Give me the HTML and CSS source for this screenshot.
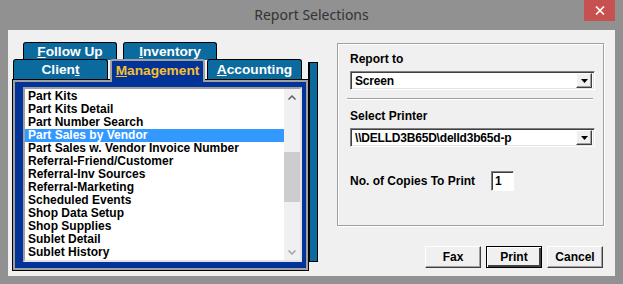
FILE: index.html
```html
<!DOCTYPE html>
<html lang="en">
<head>
  <meta charset="UTF-8" />
  <title>Report Selections</title>
  <link rel="stylesheet" href="styles.css">
</head>
<body>
  <div class="window">
    <div class="titlebar">
      <span class="title">Report Selections</span>
      <button class="close" title="Close">
        <svg width="10" height="9" viewBox="0 0 10 9"><path d="M1 0.5 L9 8.5 M9 0.5 L1 8.5" stroke="#fff" stroke-width="1.6"/></svg>
      </button>
    </div>

    <div class="client">
      <div class="tabs">
        <div class="tabs-col">
          <div class="tab-row back">
            <div class="tab"><u>F</u>ollow Up</div>
            <div class="tab"><u>I</u>nventory</div>
          </div>
          <div class="tab-row front">
            <div class="tab">Clien<u>t</u></div>
            <div class="tab active"><u>M</u>anagement</div>
            <div class="tab"><u>A</u>ccounting</div>
          </div>
          <div class="panel">
            <div class="listbox">
              <ul class="items">
                <li>Part Kits</li>
                <li>Part Kits Detail</li>
                <li>Part Number Search</li>
                <li class="selected">Part Sales by Vendor</li>
                <li>Part Sales w. Vendor Invoice Number</li>
                <li>Referral-Friend/Customer</li>
                <li>Referral-Inv Sources</li>
                <li>Referral-Marketing</li>
                <li>Scheduled Events</li>
                <li>Shop Data Setup</li>
                <li>Shop Supplies</li>
                <li>Sublet Detail</li>
                <li>Sublet History</li>
              </ul>
              <div class="scrollbar">
                <div class="arrow up">
                  <svg width="8" height="5" viewBox="0 0 8 5"><path d="M0.5 4.5 L4 1 L7.5 4.5" fill="none" stroke="#606060" stroke-width="1.5"/></svg>
                </div>
                <div class="thumb"></div>
                <div class="arrow down">
                  <svg width="8" height="5" viewBox="0 0 8 5"><path d="M0.5 0.5 L4 4 L7.5 0.5" fill="none" stroke="#a3a3a3" stroke-width="1.5"/></svg>
                </div>
              </div>
            </div>
          </div>
        </div>
        <div class="edge"></div>
      </div>

      <div class="side">
        <div class="group">
          <div class="label">Report to</div>
          <div class="combo">
            <span class="value">Screen</span>
            <span class="drop"><svg width="7" height="4" viewBox="0 0 7 4"><path d="M0 0 H7 L3.5 4 Z" fill="#000"/></svg></span>
          </div>
          <div class="separator"></div>
          <div class="label">Select Printer</div>
          <div class="combo">
            <span class="value">\\DELLD3B65D\delld3b65d-p</span>
            <span class="drop"><svg width="7" height="4" viewBox="0 0 7 4"><path d="M0 0 H7 L3.5 4 Z" fill="#000"/></svg></span>
          </div>
          <div class="copies">
            <span class="label">No. of Copies To Print</span>
            <span class="field">1</span>
          </div>
        </div>
        <div class="buttons">
          <button class="btn">Fax</button>
          <button class="btn default">Print</button>
          <button class="btn">Cancel</button>
        </div>
      </div>
    </div>
  </div>
</body>
</html>
```

FILE: styles.css
```css
:root {
  --frame: #919191;
  --face: #f0f0f0;
  --teal: #0b6a9e;
  --navy: #023399;
  --bevel: #a0a0a0;
}

body {
  margin: 0;
  background: var(--frame);
  font-family: 'Liberation Sans', Arial, sans-serif;
}

.window {
  width: 623px;
  height: 284px;
  display: flex;
  flex-direction: column;
}

/* title bar */
.titlebar {
  height: 30px;
  position: relative;
  display: flex;
  justify-content: center;
  align-items: center;
}

.title {
  font-family: 'Noto Sans', sans-serif;
  font-size: 14px;
  color: #333;
  margin-top: -2px;
}

.close {
  position: absolute;
  top: 0;
  right: 8px;
  width: 31px;
  height: 21px;
  border: none;
  padding: 0;
  background: #c75050;
  display: flex;
  justify-content: center;
  align-items: center;
}

/* client area */
.client {
  flex: 1;
  margin: 0 8px 8px;
  background: var(--face);
  display: flex;
  padding: 12px 0 0 5px;
  box-sizing: border-box;
}

.tabs {
  display: flex;
}

.tabs-col {
  width: 295px;
  display: flex;
  flex-direction: column;
}

.tab-row {
  display: flex;
}

.tab {
  box-sizing: border-box;
  background: var(--teal);
  color: #fff;
  font-weight: bold;
  font-size: 13.7px;
  text-align: center;
  border: 1px solid #000;
  border-bottom: none;
  border-radius: 3px 3px 0 0;
}

.tab-row.back {
  height: 17px;
  padding-left: 10px;
  gap: 6px;
}

.tab-row.back .tab {
  width: 94px;
  height: 18px;
  line-height: 17px;
}

.tab-row.front {
  height: 21px;
  gap: 2px;
}

.tab-row.front .tab {
  width: 95px;
  line-height: 18px;
  padding-top: 1px;
}

.tab-row.front .tab.active {
  position: relative;
  z-index: 1;
  background: var(--navy);
  color: #f6c02c;
  border: 2px solid var(--bevel);
  border-bottom: none;
  height: 23px;
  line-height: 17px;
}

.panel {
  height: 190px;
  box-sizing: border-box;
  background: var(--navy);
  border: 2px solid var(--bevel);
  box-shadow: 0 0 0 1px #000;
  padding: 5px 4px 6px 8px;
}

.listbox {
  height: 100%;
  box-sizing: border-box;
  background: #fff;
  border: 2px solid;
  border-color: var(--bevel) #e3e3e3 #e3e3e3 var(--bevel);
  display: flex;
}

.items {
  list-style: none;
  margin: 0;
  padding: 1px 0 0;
  flex: 1;
}

.items li {
  height: 13px;
  line-height: 13px;
  padding-left: 3px;
  font-size: 12px;
  font-weight: bold;
  color: #000;
  white-space: nowrap;
}

.items li.selected {
  background: #3399ff;
  color: #fff;
}

.scrollbar {
  width: 16px;
  background: var(--face);
  display: flex;
  flex-direction: column;
}

.arrow {
  height: 16px;
  display: flex;
  justify-content: center;
  align-items: center;
}

.thumb {
  height: 50px;
  margin-top: 47px;
  background: #cdcdcd;
}

.arrow.down {
  margin-top: auto;
}

.edge {
  width: 10px;
  height: 200px;
  margin-top: 20px;
  box-sizing: border-box;
  background: var(--teal);
  border: 1px solid #000;
  border-left: 2px solid #000;
}

/* right side */
.side {
  margin-left: 19px;
  padding-top: 1px;
  display: flex;
  flex-direction: column;
}

.group {
  width: 267px;
  height: 183px;
  box-sizing: border-box;
  border: 1px solid var(--bevel);
  box-shadow: inset 1px 1px #fff, 1px 1px #fff;
  padding: 8px 8px 0 12px;
}

.label {
  font-size: 12px;
  font-weight: bold;
  line-height: 14px;
  color: #000;
}

.combo {
  height: 19px;
  margin: 5px 0 0 0;
  box-sizing: border-box;
  background: #fff;
  border: 1px solid;
  border-color: #808080 #fff #fff #808080;
  box-shadow: inset 1px 1px #404040, inset -1px -1px #e3e3e3;
  display: flex;
  align-items: center;
  padding: 0 2px 0 4px;
}

.combo .value {
  flex: 1;
  font-size: 12px;
  font-weight: bold;
  letter-spacing: -0.2px;
}

.drop {
  width: 16px;
  height: 15px;
  box-sizing: border-box;
  background: var(--face);
  border: 1px solid;
  border-color: #fff #404040 #404040 #fff;
  box-shadow: inset -1px -1px #a0a0a0;
  display: flex;
  justify-content: center;
  align-items: center;
}

.separator {
  height: 1px;
  margin: 8px 2px 0 -3px;
  background: var(--bevel);
  border-bottom: 1px solid #fff;
}

.separator + .label {
  margin-top: 9px;
}

.combo + .copies {
  margin-top: 24px;
}

.copies {
  display: flex;
  align-items: center;
}

.copies .label {
  width: 141px;
}

.field {
  width: 23px;
  height: 20px;
  box-sizing: border-box;
  background: #fff;
  border: 1px solid;
  border-color: #808080 #fff #fff #808080;
  box-shadow: inset 1px 1px #404040;
  font-size: 12px;
  font-weight: bold;
  line-height: 18px;
  padding-left: 3px;
}

.buttons {
  display: flex;
  justify-content: flex-end;
  gap: 5px;
  margin-top: 20px;
  padding-right: 1px;
}

.btn {
  width: 56px;
  height: 22px;
  box-sizing: border-box;
  padding: 0;
  background: var(--face);
  border: 1px solid;
  border-color: #fff #404040 #404040 #fff;
  box-shadow: inset -1px -1px #a0a0a0;
  font-family: 'Liberation Sans', Arial, sans-serif;
  font-size: 12px;
  font-weight: bold;
  color: #000;
}

.btn.default {
  border: 1px solid #000;
  box-shadow: inset 1px 1px #fff, inset -2px -2px #404040;
}
```
